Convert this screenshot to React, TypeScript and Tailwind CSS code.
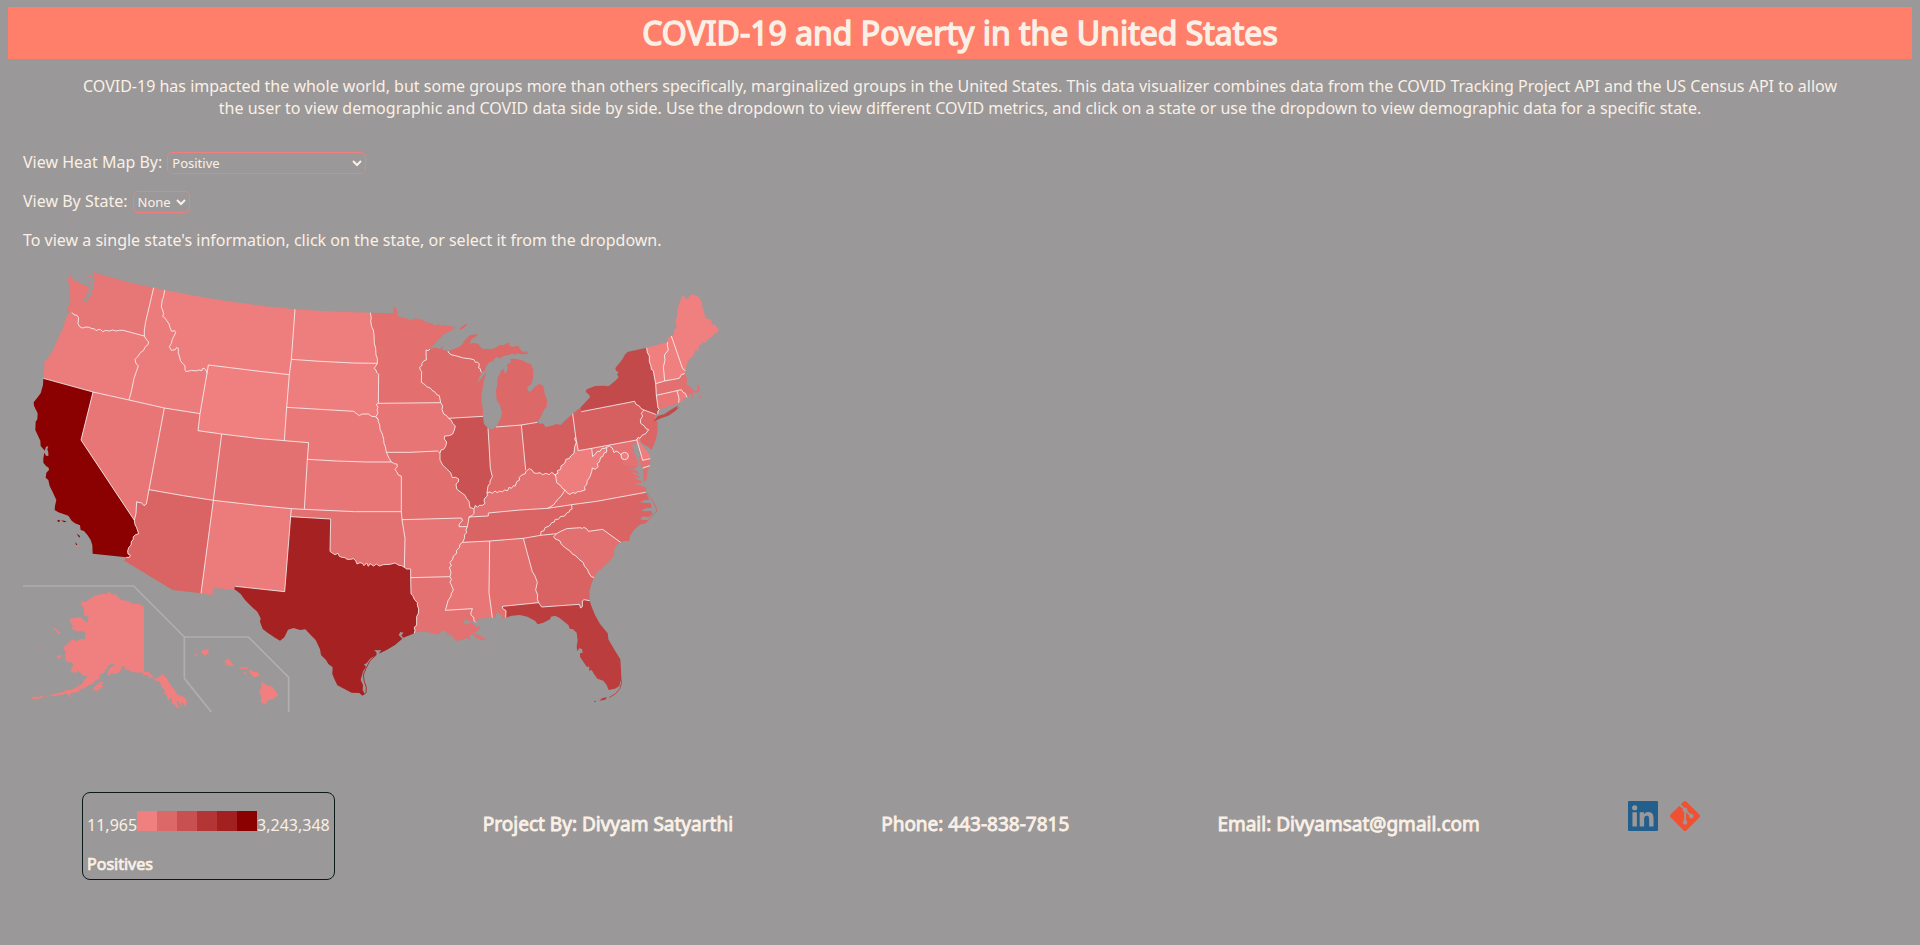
import React, { useState } from "react";

/* Tile origins of the map sheets; every arc point is relative to its sheet. */
const SHEETS: Record<string, [number, number]> = {
  W: [-69, -51],
  C: [591, 39],
  L: [1011, 69],
  N: [1551, 39],
  S: [1251, 519],
  A: [-69, 909],
  T: [591, 909],
  G: [1131, 849],
  V: [1611, 399],
};

/* Shared boundary lines. A capital letter switches to another sheet. */
const ARCS: Record<string, string> = {
  waCoast:
    "W 461,113 395,99 340,85 279,66 277,70 284,76 279,83 285,92 279,102 283,112 275,120 277,130 270,140 262,152 253,155 247,150 250,145 260,146 258,134 267,128 264,120 269,112 262,108 255,107 246,103 238,97 228,95 218,86 212,77 206,80 204,95 207,105 207,125 208,148 213,153 206,158 210,165 203,172 203,178 200,182 208,186 215,187",
  orCoast:
    "W 215,187 204,190 197,208 188,235 178,258 168,280 158,302 148,318 138,330 131,343 134,352 130,362 132,372 130,385",
  caCoast:
    "W 130,385 129,405 122,430 112,443 101,457 102,467 108,480 113,490 112,508 107,515 106,540 113,555 121,572 122,588 130,597 134,602 138,590 145,589 142,598 145,607 145,618 138,617 133,608 130,625 130,638 138,648 146,653 147,660 139,668 137,683 145,690 149,708 158,726 169,750 165,768 164,780 175,787 190,792 205,797 215,812 225,820 240,826 242,840 252,843 263,856 272,870 277,885 278,911 379,922",
  azca: "W 379,922 388,922 391,915 384,912 383,903 386,893 393,885 394,874 399,870 400,860 407,854 416,851 412,840 410,833 405,824 403,811",
  canv: "W 403,811 243,570 279,426",
  ornv: "W 279,426 387,450",
  orca: "W 130,385 279,426",
  waor: "W 215,187 222,194 231,196 236,204 234,220 238,229 247,234 258,231 268,232 276,236 283,236 288,242 297,238 302,239 308,245 317,241 328,243 338,240 348,243 358,241 370,241 392,247 433,258",
  waid: "W 433,258 433,240 437,215 461,113",
  orid: "W 433,258 438,267 446,276 444,284 436,290 430,302 422,307 413,320 405,328 408,341 415,347 409,365 402,385 395,420 387,450",
  idnv: "W 387,450 493,474",
  idut: "W 493,474 600,491",
  idwy: "W 600,491 621,370",
  idmt: "W 621,370 618,360 612,355 607,356 606,362 596,360 588,363 575,361 558,365 555,360 555,347 547,340 541,331 538,318 535,310 535,295 529,293 526,299 514,301 508,290 514,280 517,268 527,248 524,242 515,244 510,233 507,222 500,212 494,203 488,199 491,190 484,170 487,148 490,143 494,120",
  idTop: "W 461,113 494,120",
  mtTop: "W 494,120 560,133 640,147 700,156 C 120,77 225,88",
  nvut: "W 493,474 447,719",
  utwy: "W 600,491 594,542 665,552",
  utco: "W 665,552 640,751",
  utaz: "W 447,719 550,737 640,751",
  nvaz: "W 447,719 439,762 432,767 424,758 417,758 410,755 408,790 403,811",
  mtwy: "W 621,370 625,345 780,364 C 208,284",
  mtsd: "C 208,284 214,238",
  mtnd: "C 214,238 225,88",
  wysd: "C 208,284 200,382",
  wyne: "C 200,382 193,482",
  wyco: "W 665,552 780,566 C 193,482",
  azMex: "W 379,922 373,932 518,1020 A 603,70",
  aznm: "W 640,751 A 603,70",
  nmMex: "A 603,70 637,76 640,53 703,60 706,49",
  nmtx: "A 706,49 854,65 C 212,710",
  nmok: "C 212,710 214,686",
  conm: "W 640,751 780,767 C 214,686",
  cone: "C 193,482 266,488 262,538",
  coks: "C 262,538 253,688",
  cook: "C 253,688 214,686",
  ksok: "C 253,688 404,695 544,695",
  neks: "C 262,538 350,543 442,546 514,546",
  nemo: "C 514,546 508,536 499,517",
  ksmo: "C 514,546 523,551 531,552 532,560 525,568 530,575 535,585 544,588 544,695",
  neia: "C 499,517 496,500 492,490 491,478 487,462 480,448 479,435 475,425 474,417",
  sdne: "C 200,382 401,394 410,401 418,407 426,402 445,402 455,409 466,410 474,417",
  sdia: "C 474,417 468,410 474,398 471,390 474,382 469,373 475,370",
  ndsd: "C 214,238 300,244 400,249 472,250",
  ndTop: "C 225,88 320,94 451,98",
  ndmn: "C 451,98 454,115 452,122 455,140 460,150 462,165 463,190 467,205 468,225 472,235 472,250",
  sdmn: "C 472,250 467,259 462,265 468,270 470,277 476,283 475,370",
  mnia: "C 475,370 662,368",
  mnTop:
    "C 451,98 519,100 519,83 523,81 529,84 533,108 550,114 560,115 568,122 588,115 600,117 607,120 620,127 636,131 646,138 655,132 662,138 672,135 685,137 708,142 692,152 672,163 650,185 630,207",
  mnwi: "C 630,207 625,212 618,210 619,240 611,243 606,250 605,258 599,262 601,270 605,275 604,307 615,314 620,320 632,325 636,331 646,337 650,344 658,347 662,368",
  iawi: "C 662,368 668,378 666,388 671,402 680,407 686,415",
  iail: "C 686,415 694,421 698,430 706,438 703,450 698,462 688,467 674,468 673,477 680,486 677,499 671,508 663,510 660,520",
  iamo: "C 499,517 570,517 653,513 660,520",
  wiil: "C 686,415 L 369,379",
  moil: "C 660,520 660,540 668,555 680,567 692,578 697,593 707,592 716,597 715,606 708,612 710,627 720,635 735,646 740,656 747,664 750,683 756,684 762,688",
  moky: "C 762,688 762,700 756,707 747,711",
  motn: "C 747,711 745,725 742,740",
  moar: "C 546,719 724,714 728,721 718,732 717,740 742,740",
  mook: "C 544,695 546,719",
  okar: "C 546,719 555,775 553,862",
  oktx: "C 212,710 332,717 330,814 338,820 345,824 354,820 358,829 366,832 375,833 381,838 392,838 400,836 407,842 411,852 420,848 427,850 432,857 440,849 445,859 450,851 461,858 469,852 478,858 490,854 510,853 525,849 537,856 545,857 553,862",
  txar: "C 553,862 560,867 572,867 572,893",
  txla: "C 572,893 T 573,72 578,76 583,88 592,98 592,105 596,118 595,130 590,140 590,165 583,172 585,182 583,190",
  arla: "C 572,893 690,890",
  artn: "C 742,740 738,750 740,758 733,765 734,773 728,787",
  arms: "C 728,787 720,793 718,803 709,812 710,820 700,828 698,838 690,847 694,858 688,862 693,877 690,890",
  lams: "C 690,890 694,898 690,907 694,915 700,930 694,940 693,948 684,962 680,978 676,991 757,986 G 215,183 212,190 214,196 221,202 222,212 227,217",
  laCoast:
    "G 43,248 60,245 80,246 100,250 112,254 120,250 125,241 138,245 142,248 132,252 144,254 150,252 160,262 165,270 176,274 180,268 190,270 199,263 212,271 208,258 222,250 235,256 250,262 255,266 248,271 235,268 222,258 218,250 230,246 240,235 238,228 228,232 222,222 212,216 205,224 195,222 187,215 196,210 212,213 227,217",
  msCoast: "G 227,217 S 115,537 135,534 157,533",
  alCoast: "S 157,533 167,532 168,522 175,516 180,526 186,523 188,530 182,538 197,533",
  msal: "S 157,533 147,458 149,303",
  mstn: "C 728,787 S 149,303",
  altn: "S 149,303 250,295",
  gatn: "S 250,295 302,286",
  ganc: "S 302,286 350,281",
  alga: "S 250,295 262,340 277,395 285,408 292,427 287,450 293,465 292,478 296,488",
  alfl: "S 296,488 187,499 188,506 198,512 197,533",
  gafl: "S 296,488 305,501 418,493 422,504 427,500 427,483 432,479 449,482",
  flCoast:
    "S 449,482 455,500 465,525 480,552 503,580 505,598 525,632 541,658 543,690 544,715 538,738 525,746 506,750 500,735 490,722 472,716 462,702 455,690 447,692 448,680 440,680 430,665 420,650 420,640 428,638 426,627 418,625 412,634 410,620 413,600 410,578 398,567 390,567 385,555 370,543 358,533 345,527 333,530 330,538 310,548 293,553 285,542 262,530 240,525 215,527 197,533",
  gaCoast: "S 449,482 448,455 455,430 462,412",
  gasc: "S 350,281 341,290 345,296 360,303 364,313 378,325 390,333 396,341 408,348 417,358 430,368 433,378 442,388 448,402 455,411 462,412",
  scCoast: "S 462,412 475,392 485,388 495,375 505,368 515,355 523,347 522,332 530,315 542,307",
  ncsc: "S 542,307 488,268 445,274 440,266 431,262 428,265 420,263 380,266 360,275 350,281",
  ncCoast:
    "S 542,307 550,303 567,303 570,288 580,272 595,257 605,252 618,250 624,240 608,240 600,237 610,229 625,232 638,222 633,212 612,214 603,210 620,205 635,203 633,190 615,188 598,187 615,180 628,180 617,157",
  nctn: "S 302,286 303,275 312,272 315,263 328,258 335,248 343,246 346,238 355,238 361,230 374,228 380,219 389,215 389,210 396,207 395,194",
  tnva: "S 395,194 323,205",
  kytn: "S 323,205 240,210 145,219 145,228 86,231",
  ncva: "S 395,194 470,184 540,171 617,157",
  kyva: "S 323,205 340,195 352,180 366,165 375,150",
  kywv: "S 375,150 367,145 362,137 350,128 347,108",
  kyoh: "S 347,108 342,102 335,97 328,104 318,100 308,104 300,98 290,100 282,99 276,90 268,86 257,95",
  inky: "S 257,95 256,101 245,105 237,113 239,120 230,125 226,138 220,137 214,145 207,142 203,152 193,150 188,155 178,154 172,158 165,153 157,160 150,156 141,158",
  ilky: "S 141,158 142,168 134,175 132,183 135,190 127,196 118,196 112,202 106,196 102,207",
  ilin: "L 384,415 388,480 391,535 397,560 390,573 390,580 384,588 S 141,158",
  inoh: "L 484,405 497,540",
  inmi: "L 484,405 408,411",
  inLake: "L 408,411 397,418 384,415",
  ilLake: "L 384,415 372,402 369,379",
  ohmi: "L 484,405 532,397",
  ohLake: "L 532,397 540,402 548,400 557,411 570,409 590,402 602,405 620,387 638,371",
  ohpa: "L 638,371 N 107,470",
  ohwv: "N 107,470 104,478 109,487 104,500 102,520 92,528 88,535 78,538 74,550 63,558 62,568 52,572 54,580 46,583 47,588",
  pawv: "N 107,470 115,512 155,505",
  mdpa: "N 155,505 290,480",
  depa: "N 290,480 294,472 300,475",
  njpa: "N 300,475 306,466 317,461 326,449 318,446 313,438 302,430 301,420 308,408 304,400 312,390",
  nypa: "N 124,395 284,364 288,373 298,378 303,386 312,390",
  paLake: "N 97,402 122,382 124,395",
  mdwv: "N 155,505 158,530 168,520 172,514 180,514 186,505 196,505 200,500",
  vawv: "S 500,22 500,36 492,40 488,50 482,52 478,66 472,70 474,80 466,88 457,84 455,95 450,110 442,122 440,134 434,140 435,150 420,155 412,155 408,160 398,158 390,163 383,160 375,150",
  mdva: "S 500,22 508,18 517,24 522,38 528,33 537,38 544,46",
  potomac: "S 544,46 V 194,179 188,192 200,198 212,196 228,203",
  vaCoast:
    "V 228,203 222,206 206,203 215,208 232,212 236,222 218,216 222,222 238,229 240,234 222,231 236,240 245,243 242,250 218,248 238,256 255,262 260,268 257,276",
  mdBay: "V 228,203 236,197 234,184 226,166 220,157 222,146 217,138 219,130 224,134 230,128 230,118",
  mdShore:
    "V 230,118 234,130 240,135 234,140 242,150 236,158 243,163 236,170 242,178 235,183 242,190 243,206 248,202 270,197 271,176",
  demd: "V 230,118 248,181 271,176",
  deCoast: "V 240,115 238,122 246,135 258,150 270,163 271,176",
  njde: "N 300,475 302,485 312,494 325,500 334,510 340,498 348,478 352,455 353,428 345,418 347,403",
  nynj: "N 312,390 347,403",
  nySouth: "N 347,403 353,402",
  ctny: "N 353,402 354,393 358,388 354,384 349,346",
  many: "N 349,346 347,311",
  nyvt: "N 347,311 342,285 340,272 334,268 333,258 328,245 328,228 322,218 320,203",
  nyTop:
    "N 320,203 262,216 254,225 247,238 238,250 226,264 228,272 236,277 231,283 236,292 225,303 214,312 205,319 190,317 165,318 140,328 137,335 148,345 150,352 122,382 124,395",
  vtTop: "N 320,203 383,186",
  nhvt: "N 383,186 382,196 385,210 373,225 375,240 370,262 372,280 374,303",
  mavt: "N 347,311 374,303",
  manh: "N 374,303 418,295 424,284 434,281",
  menh: "N 436,272 428,266 424,255 394,168",
  nhTop: "N 383,186 384,173 394,168",
  nhCoast: "N 434,281 436,272",
  meCoast:
    "N 394,168 402,166 402,152 410,142 407,120 412,108 412,88 427,45 434,50 438,57 446,52 458,42 475,50 482,60 490,90 497,115 513,118 516,133 528,135 530,143 537,150 532,157 522,163 516,172 508,171 508,180 500,178 498,190 488,185 486,196 480,192 474,204 480,212 468,210 462,220 458,230 448,236 443,248 438,262 436,272",
  maCoast:
    "N 434,281 440,292 442,303 438,312 452,322 462,333 474,330 472,318 466,313 477,318 480,332 470,338 460,336 458,346 450,340 446,350 441,352",
  mari: "N 424,329 430,338 436,340 441,352",
  ctma: "N 349,346 411,332",
  mariTop: "N 411,332 424,329",
  ctri: "N 411,332 417,355 416,368",
  ctCoast: "N 416,368 400,375 380,380 362,388 353,402",
  riCoast: "N 416,368 428,364 430,352 434,356 441,352",
  wiNorth: "C 630,207 L 225,172 240,177 250,167 246,180 255,181 264,183",
  miwi: "L 264,183 266,188 273,194 290,198 310,204 328,206 342,209 346,217 352,216 358,222 356,234 362,237 361,243 366,247",
  wiLake: "L 366,247 360,258 353,275 358,274 366,262 375,252 381,243 373,268 370,283 365,310 364,335 369,360 369,379",
  upper:
    "L 264,183 280,178 297,171 305,165 315,150 330,136 352,132 350,139 335,147 328,163 340,158 355,162 362,172 370,178 380,176 395,178 405,174 420,165 432,165 445,157 448,168 460,170 475,167 480,178 494,188 500,184 503,192 485,193 472,190 465,195 458,191 440,196 425,200 423,206 410,200 402,208 400,214 388,216 378,230 374,242 366,247",
  lower:
    "L 408,411 420,390 426,370 420,345 410,330 408,300 412,285 413,265 420,250 425,240 432,236 434,252 440,246 444,232 440,226 447,219 454,217 450,207 465,206 478,209 490,212 500,218 512,222 520,240 519,262 515,282 502,292 503,303 512,305 525,290 538,281 550,288 555,315 561,330 560,350 553,358 545,375 540,385 532,397",
  txCoast:
    "T 583,190 565,197 550,203 544,196 551,188 541,186 536,195 547,206 525,225 500,240 476,251 484,240 474,241 463,240 470,248 468,256 450,266 440,280 432,283 438,291 430,302 426,315 422,330 429,345 428,360 434,372 427,377 418,369 395,368 372,356 352,346 342,325 337,312 338,292 325,282 318,270 303,255 300,238 287,210 270,193 256,178 240,180 221,174 204,179 193,202 180,212 165,203 145,190 128,177 120,155 122,145 112,125 98,113 75,90 62,72 50,62 43,58 45,49",
};

type StateShape = { name: string; fill: string; ring: string };

const STATES: StateShape[] = [
  { name: "Washington", fill: "#e77676", ring: "waCoast waor waid" },
  { name: "Oregon", fill: "#ec7c7c", ring: "orCoast orca ornv orid waor" },
  { name: "California", fill: "#8b0000", ring: "caCoast azca canv orca" },
  { name: "Idaho", fill: "#ec7c7c", ring: "idTop idmt idwy idut idnv orid waid" },
  { name: "Nevada", fill: "#e87676", ring: "ornv idnv nvut nvaz canv" },
  { name: "Montana", fill: "#ee7e7e", ring: "mtTop mtnd mtsd mtwy idmt" },
  { name: "Wyoming", fill: "#f08080", ring: "mtwy wysd wyne wyco utwy idwy" },
  { name: "Utah", fill: "#e67373", ring: "idut utwy utco utaz nvut" },
  { name: "Arizona", fill: "#da6363", ring: "utaz aznm azMex azca nvaz" },
  { name: "Colorado", fill: "#e47171", ring: "wyco cone coks cook conm utco" },
  { name: "New Mexico", fill: "#ec7b7b", ring: "conm nmok nmtx nmMex aznm" },
  { name: "North Dakota", fill: "#ee7d7d", ring: "ndTop ndmn ndsd mtnd" },
  { name: "South Dakota", fill: "#ee7d7d", ring: "ndsd sdmn sdia sdne wysd mtsd" },
  { name: "Nebraska", fill: "#ea7878", ring: "sdne neia nemo neks cone wyne" },
  { name: "Kansas", fill: "#e97676", ring: "neks ksmo ksok coks" },
  { name: "Oklahoma", fill: "#e47171", ring: "ksok mook okar oktx nmok cook" },
  { name: "Texas", fill: "#a62121", ring: "oktx txar txla txCoast nmtx" },
  { name: "Minnesota", fill: "#e36f6f", ring: "mnTop mnwi mnia sdmn ndmn" },
  { name: "Iowa", fill: "#e77575", ring: "mnia iawi iail iamo neia sdia" },
  { name: "Missouri", fill: "#e26e6e", ring: "iamo moil moky motn moar mook ksmo nemo" },
  { name: "Arkansas", fill: "#e77575", ring: "moar artn arms arla txar okar" },
  { name: "Louisiana", fill: "#e37171", ring: "arla lams laCoast txla" },
  { name: "Wisconsin", fill: "#de6969", ring: "wiNorth miwi wiLake wiil iawi mnwi" },
  { name: "Illinois", fill: "#cb5252", ring: "wiil ilLake ilin ilky moil iail" },
  { name: "Michigan", fill: "#dd6868", ring: "upper miwi" },
  { name: "Michigan (Lower Peninsula)", fill: "#dd6868", ring: "lower ohmi inmi" },
  { name: "Indiana", fill: "#de6969", ring: "inmi inoh inky ilin inLake" },
  { name: "Ohio", fill: "#d45d5d", ring: "ohmi ohLake ohpa ohwv kyoh inoh" },
  { name: "Kentucky", fill: "#e47171", ring: "inky kyoh kywv kyva kytn moky ilky" },
  { name: "Tennessee", fill: "#da6363", ring: "kytn tnva nctn gatn altn mstn artn motn" },
  { name: "Mississippi", fill: "#e87676", ring: "mstn msal msCoast lams arms" },
  { name: "Alabama", fill: "#e36f6f", ring: "altn alga alfl alCoast msal" },
  { name: "Georgia", fill: "#d96262", ring: "gatn ganc gasc gaCoast gafl alga" },
  { name: "Florida", fill: "#bb3d3d", ring: "gafl flCoast alfl" },
  { name: "South Carolina", fill: "#e37070", ring: "ncsc scCoast gasc" },
  { name: "North Carolina", fill: "#da6363", ring: "ncva ncCoast ncsc ganc nctn" },
  { name: "Virginia", fill: "#e16d6d", ring: "mdva potomac vaCoast ncva tnva kyva vawv" },
  { name: "West Virginia", fill: "#ee7d7d", ring: "pawv mdwv vawv kywv ohwv" },
  { name: "Maryland", fill: "#e57272", ring: "mdpa mdBay potomac mdva mdwv" },
  { name: "Maryland (Eastern Shore)", fill: "#e57272", ring: "mdShore demd" },
  { name: "Delaware", fill: "#ee7d7d", ring: "depa deCoast demd" },
  { name: "Pennsylvania", fill: "#d66060", ring: "nypa njpa depa mdpa pawv ohpa paLake" },
  { name: "New Jersey", fill: "#dc6565", ring: "nynj njde njpa" },
  { name: "New York", fill: "#c34a4a", ring: "nyTop nypa nynj nySouth ctny many nyvt" },
  { name: "Connecticut", fill: "#e87676", ring: "ctma ctri ctCoast ctny" },
  { name: "Rhode Island", fill: "#ed7c7c", ring: "mariTop mari riCoast ctri" },
  { name: "Massachusetts", fill: "#e37070", ring: "manh maCoast mari mariTop ctma many mavt" },
  { name: "Vermont", fill: "#f08080", ring: "vtTop nhvt mavt nyvt" },
  { name: "New Hampshire", fill: "#f08080", ring: "nhTop menh nhCoast manh nhvt" },
  { name: "Maine", fill: "#f08080", ring: "meCoast menh" },
];

const ISLANDS: { fill: string; points: string[] }[] = [
  {
    fill: "#f08080",
    points: [
      "A 432,110 432,305 445,305 452,313 465,326 472,325 488,313 500,325 512,345 525,362 533,374 545,377 557,385 561,398 556,411 550,400 543,396 547,410 538,400 533,392 530,398 539,413 530,413 522,402 514,400 517,388 508,382 510,392 503,388 500,376 490,366 497,362 482,350 486,346 478,336 465,331 458,322 448,325 445,316 430,315 428,308 398,307 385,300 372,297 377,291 366,289 362,303 350,311 335,310 322,318 322,308 330,293 345,285 338,280 325,287 312,308 295,316 300,325 285,334 275,343 262,348 255,354 240,358 235,367 215,368 206,376 198,370 188,375 175,374 170,378 155,377 155,373 172,370 190,366 200,360 212,360 225,353 245,343 255,328 262,318 250,317 243,310 235,303 225,310 213,303 214,293 220,287 216,277 205,277 195,272 197,262 194,253 199,248 192,240 193,230 205,218 218,208 225,210 228,215 240,207 255,208 255,200 257,188 245,183 232,184 215,177 219,168 214,160 208,147 222,143 245,142 252,152 262,158 264,145 268,140 252,135 252,115 242,104 245,94 258,96 272,85 285,77 305,72 320,72 327,65 338,74 345,73 355,80 362,90 380,92 400,102 418,102",
      "A 283,350 303,335 313,337 302,343 309,350 290,363 280,360",
      "A 92,387 102,380 115,381 130,376 128,384 108,387",
      "A 136,382 143,375 147,378",
      "A 158,176 167,174 174,182 183,190 175,192 170,184",
      "A 168,258 186,256 180,267",
      "A 119,224 125,229 122,231",
      "A 204,378 213,376 212,382",
      "A 603,245 609,239 627,238 624,251 614,257",
      "A 582,258 590,250 592,254 587,259",
      "A 673,274 686,266 690,274 700,282 697,289 680,285",
      "A 718,291 744,293 746,297 722,297",
      "A 730,305 740,308 736,316",
      "A 746,303 752,299 762,306 772,305 779,315 765,323 755,316",
      "A 745,323 754,323 748,328",
      "A 783,339 788,336 800,345 818,350 826,362 835,375 818,388 805,391 795,404 783,397 784,380 777,362 785,352",
    ],
  },
  {
    fill: "#8b0000",
    points: [
      "W 171,812 177,809 181,813 175,816",
      "W 184,811 200,814 192,817",
      "W 230,851 240,858 238,863",
      "W 226,876 232,884 228,885",
    ],
  },
  { fill: "#e77676", points: ["W 262,80 274,77 270,85", "W 266,90 276,95 270,99", "W 252,130 258,124 262,132"] },
  { fill: "#dd6868", points: ["L 298,116 310,107 323,99 318,108 303,119", "L 494,186 500,183 503,192"] },
  {
    fill: "#c34a4a",
    points: ["N 340,425 352,408 372,403 395,388 415,376 410,385 419,381 405,394 385,407 365,414 352,420"],
  },
  { fill: "#e37070", points: ["N 452,349 461,348 460,352", "N 474,350 485,348 484,353"] },
  { fill: "#e16d6d", points: ["V 249,207 269,199 262,215 260,240 251,246 250,225"] },
  { fill: "#bb3d3d", points: ["S 478,782 487,774 501,772 496,779"] },
];

const BARRIER_LINES: { stroke: string; points: string }[] = [
  { stroke: "#da6363", points: "S 617,157 628,170 638,182 649,205 650,213 635,230 622,244" },
  { stroke: "#a62121", points: "T 470,254 450,272 438,295 430,315 433,335 439,352 438,368 430,374" },
  { stroke: "#bb3d3d", points: "S 462,785 468,784" },
  { stroke: "#bb3d3d", points: "S 508,772 526,762 540,745 545,728 543,716" },
];

const DC = { cx: 1805, cy: 567 };

function parse(arc: string): [number, number][] {
  let origin: [number, number] = [0, 0];
  const out: [number, number][] = [];
  for (const token of arc.split(" ")) {
    if (SHEETS[token]) {
      origin = SHEETS[token];
    } else {
      const [x, y] = token.split(",").map(Number);
      out.push([x + origin[0], y + origin[1]]);
    }
  }
  return out;
}

const gap = (a: [number, number], b: [number, number]) => Math.hypot(a[0] - b[0], a[1] - b[1]);
const toPoints = (pts: [number, number][]) => pts.map((p) => p.join(",")).join(" ");

/* Joins arcs end to end, turning each one round where that closes the ring. */
function buildRing(ring: string): string {
  const arcs = ring.split(" ").map((n) => parse(ARCS[n]));
  const first = arcs[0];
  const next = arcs[1];
  const near = (p: [number, number]) => Math.min(gap(p, next[0]), gap(p, next[next.length - 1]));
  const pts = near(first[0]) < near(first[first.length - 1]) ? [...first].reverse() : [...first];
  for (const arc of arcs.slice(1)) {
    const tail = pts[pts.length - 1];
    const forward = gap(tail, arc[0]) <= gap(tail, arc[arc.length - 1]);
    pts.push(...(forward ? arc : [...arc].reverse()));
  }
  return toPoints(pts);
}

const uses: Record<string, number> = {};
STATES.forEach((s) => s.ring.split(" ").forEach((n) => (uses[n] = (uses[n] || 0) + 1)));
const BORDERS = Object.keys(ARCS).filter((n) => uses[n] > 1 && n !== "potomac");

function HeatMap({ onSelect }: { onSelect: (name: string) => void }) {
  return (
    <svg viewBox="0 0 2160 1335" className="block w-[720px] max-w-full" role="img" aria-label="Heat map of the United States">
      {STATES.map((s) => (
        <polygon key={s.name} points={buildRing(s.ring)} fill={s.fill} className="cursor-pointer" onClick={() => onSelect(s.name)} />
      ))}
      {ISLANDS.map((g) => g.points.map((p) => <polygon key={p} points={toPoints(parse(p))} fill={g.fill} />))}
      {BARRIER_LINES.map((l) => (
        <polyline key={l.points} points={toPoints(parse(l.points))} fill="none" stroke={l.stroke} strokeWidth="2.5" />
      ))}
      <g fill="none" stroke="#ffffff" strokeOpacity="0.75" strokeWidth="3" strokeLinejoin="round">
        {BORDERS.map((n) => (
          <polyline key={n} points={toPoints(parse(ARCS[n]))} />
        ))}
        <polyline points={toPoints(parse("V 248,204 270,197"))} />
      </g>
      <circle cx={DC.cx} cy={DC.cy} r="11" fill="#ee7d7d" stroke="#fbdcdc" strokeWidth="3" />
      <path d="M0 957H332L484 1110H676L797 1231V1335M484 1110V1234L565 1335" fill="none" stroke="#b0afaf" strokeWidth="5" />
    </svg>
  );
}

const METRICS = [
  "Positive",
  "Negative",
  "Deaths",
  "Hospitalized Currently",
  "Total Test Results",
  "Death Rate Per Capita",
];
const LEGEND = ["bg-[#f08080]", "bg-[#dc6868]", "bg-[#c95050]", "bg-[#b33535]", "bg-[#a32020]", "bg-[#8b0000]"];

/* Regular width letters with a thickened outline. */
const HEAVY = "font-normal [-webkit-text-stroke:0.045em_currentColor]";

function Legend() {
  return (
    <div className="rounded-lg border border-[#0a1a17] px-1 pt-[18px] pb-1">
      <div className="flex items-start leading-[22px]">
        <span className="whitespace-nowrap pt-[3px]">11,965</span>
        <div className="flex">
          {LEGEND.map((c) => (
            <div key={c} className={`size-5 ${c}`} />
          ))}
        </div>
        <span className="whitespace-nowrap pt-[3px]">3,243,348</span>
      </div>
      <h4 className={`mt-[17px] leading-[22px] ${HEAVY}`}>Positives</h4>
    </div>
  );
}

export default function App() {
  const [metric, setMetric] = useState("Positive");
  const [region, setRegion] = useState("None");
  const selectStyle = "h-[22px] rounded-[5px] border border-[#f08080] bg-[#9a9898] text-[13px] text-[#faf0e6]";
  const contact = `pt-[19px] text-[19px] leading-[26px] ${HEAVY}`;

  return (
    <div className="min-h-screen bg-[#9a9898] px-2 pt-[7px] font-['Noto_Sans',sans-serif] text-base text-[#faf0e6]">
      <header className="bg-[#ff7f6a] py-1 text-center">
        <h1 className={`text-[32px] leading-[44px] ${HEAVY}`}>COVID-19 and Poverty in the United States</h1>
      </header>

      <p className="px-[70px] pt-4 text-center leading-[22px]">
        COVID-19 has impacted the whole world, but some groups more than others specifically, marginalized groups in the
        United States. This data visualizer combines data from the COVID Tracking Project API and the US Census API to
        allow the user to view demographic and COVID data side by side. Use the dropdown to view different COVID
        metrics, and click on a state or use the dropdown to view demographic data for a specific state.
      </p>

      <main className="flex flex-col gap-4 px-[15px] pt-8">
        <div className="flex items-center gap-[5px] leading-[23px]">
          <label htmlFor="metric">View Heat Map By:</label>
          <select id="metric" value={metric} onChange={(e) => setMetric(e.target.value)} className={`w-[199px] ${selectStyle}`}>
            {METRICS.map((m) => (
              <option key={m}>{m}</option>
            ))}
          </select>
        </div>
        <div className="flex items-center gap-[5px] leading-[23px]">
          <label htmlFor="region">View By State:</label>
          <select id="region" value={region} onChange={(e) => setRegion(e.target.value)} className={`w-[57px] ${selectStyle}`}>
            <option>None</option>
            {STATES.map((s) => (
              <option key={s.name}>{s.name}</option>
            ))}
          </select>
        </div>
        <p className="leading-[22px]">To view a single state's information, click on the state, or select it from the dropdown.</p>
        <HeatMap onSelect={setRegion} />
      </main>

      <footer className="flex items-start justify-around pt-20 pb-[64px]">
        <Legend />
        <h3 className={contact}>Project By: Divyam Satyarthi</h3>
        <h3 className={contact}>Phone: 443-838-7815</h3>
        <h3 className={contact}>Email: Divyamsat@gmail.com</h3>
        <div className="flex w-[210px] gap-3 pt-[9px]">
          <a href="#linkedin" aria-label="LinkedIn">
            <svg viewBox="0 0 24 24" className="size-[30px]" fill="#235f8c">
              <path d="M20.447 20.452h-3.554v-5.569c0-1.328-.027-3.037-1.852-3.037-1.853 0-2.136 1.445-2.136 2.939v5.667H9.351V9h3.414v1.561h.046c.477-.9 1.637-1.85 3.37-1.85 3.601 0 4.267 2.37 4.267 5.455v6.286zM5.337 7.433a2.062 2.062 0 0 1-2.063-2.065 2.064 2.064 0 1 1 2.063 2.065zm1.782 13.019H3.555V9h3.564v11.452zM23 0H1C.45 0 0 .45 0 1v22c0 .55.45 1 1 1h22c.55 0 1-.45 1-1V1c0-.55-.45-1-1-1z" />
            </svg>
          </a>
          <a href="#git" aria-label="Git">
            <svg viewBox="0 0 24 24" className="size-[30px]" fill="#f05133">
              <path d="M23.546 10.93L13.067.452c-.604-.603-1.582-.603-2.188 0L8.708 2.627l2.76 2.76c.645-.215 1.379-.07 1.889.441.516.515.658 1.258.438 1.9l2.658 2.66c.645-.223 1.387-.078 1.9.435.721.72.721 1.884 0 2.604-.719.719-1.881.719-2.6 0-.539-.541-.674-1.337-.404-1.996L12.86 8.955v6.525c.176.086.342.203.488.348.713.721.713 1.883 0 2.6-.719.721-1.889.721-2.609 0-.719-.719-.719-1.879 0-2.598.182-.18.387-.316.605-.406V8.835c-.217-.091-.424-.222-.6-.401-.545-.545-.676-1.342-.396-2.009L7.636 3.7.45 10.881c-.6.605-.6 1.584 0 2.189l10.48 10.477c.604.604 1.582.604 2.186 0l10.43-10.43c.605-.603.605-1.582 0-2.187" />
            </svg>
          </a>
        </div>
      </footer>
    </div>
  );
}
